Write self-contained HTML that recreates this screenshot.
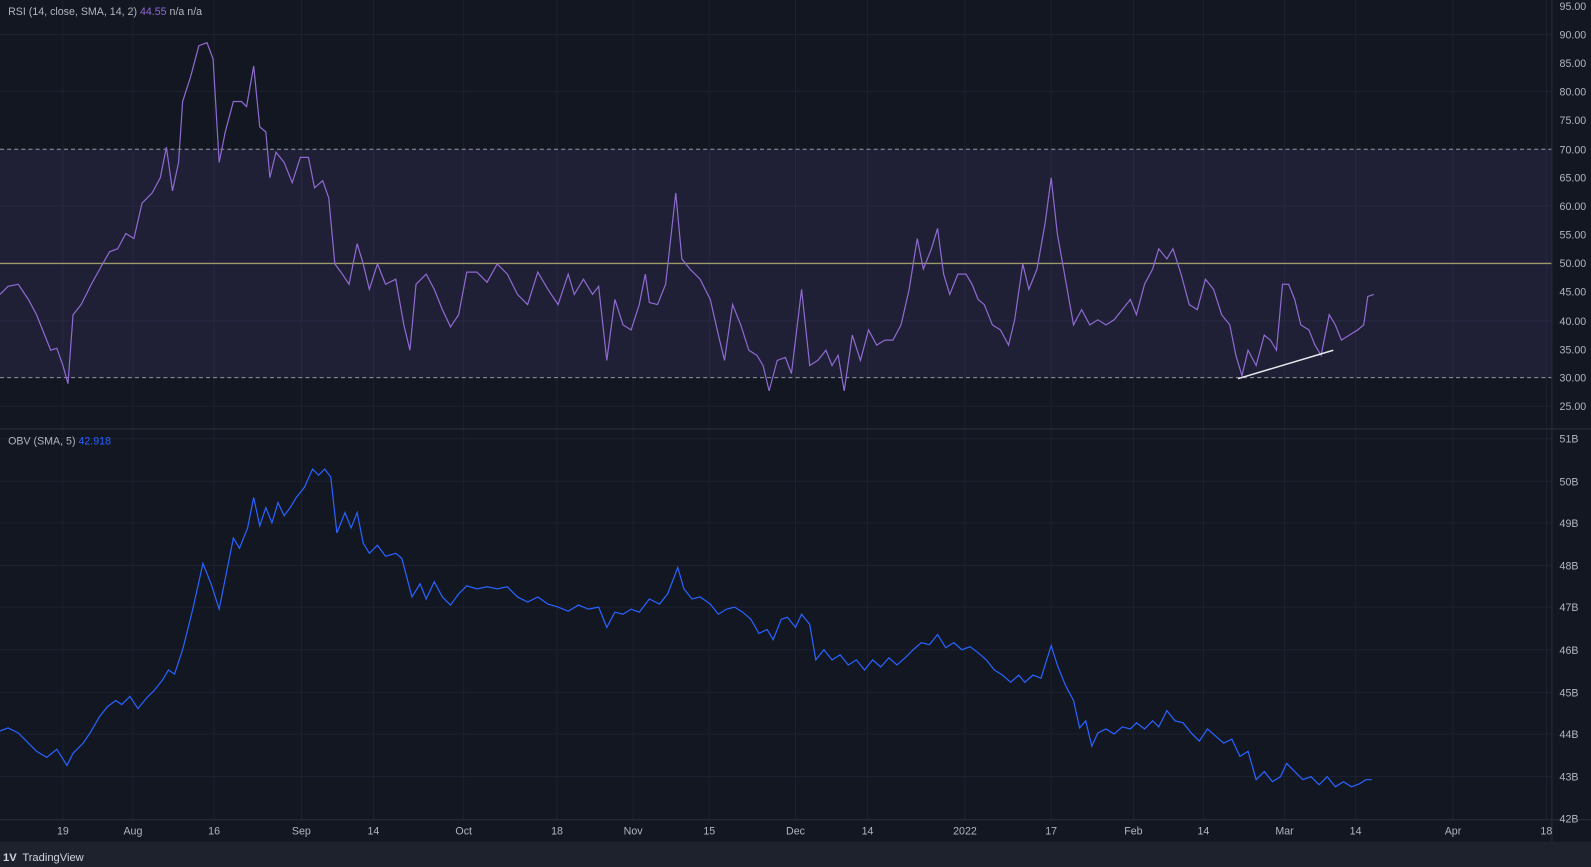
<!DOCTYPE html><html><head><meta charset="utf-8"><style>
html,body{margin:0;padding:0;background:#131722;width:1591px;height:867px;overflow:hidden;font-family:"Liberation Sans",sans-serif}
svg{position:absolute;left:0;top:0}
</style></head><body>
<svg width="1591" height="867" viewBox="0 0 1568 854" preserveAspectRatio="none" xmlns="http://www.w3.org/2000/svg" font-family="Liberation Sans, sans-serif">
<rect width="1568" height="854" fill="#131722"/>
<g stroke="#1d2130" stroke-width="1">
<line x1="62" y1="0" x2="62" y2="807"/><line x1="131" y1="0" x2="131" y2="807"/><line x1="211" y1="0" x2="211" y2="807"/><line x1="297" y1="0" x2="297" y2="807"/><line x1="368" y1="0" x2="368" y2="807"/><line x1="457" y1="0" x2="457" y2="807"/><line x1="549" y1="0" x2="549" y2="807"/><line x1="624" y1="0" x2="624" y2="807"/><line x1="699" y1="0" x2="699" y2="807"/><line x1="784" y1="0" x2="784" y2="807"/><line x1="855" y1="0" x2="855" y2="807"/><line x1="951" y1="0" x2="951" y2="807"/><line x1="1036" y1="0" x2="1036" y2="807"/><line x1="1117" y1="0" x2="1117" y2="807"/><line x1="1186" y1="0" x2="1186" y2="807"/><line x1="1266" y1="0" x2="1266" y2="807"/><line x1="1336" y1="0" x2="1336" y2="807"/><line x1="1432" y1="0" x2="1432" y2="807"/><line x1="1524" y1="0" x2="1524" y2="807"/>
<line x1="0" y1="34" x2="1529" y2="34"/><line x1="0" y1="90" x2="1529" y2="90"/><line x1="0" y1="203" x2="1529" y2="203"/><line x1="0" y1="316" x2="1529" y2="316"/><line x1="0" y1="400" x2="1529" y2="400"/>
<line x1="0" y1="432" x2="1529" y2="432"/><line x1="0" y1="474" x2="1529" y2="474"/><line x1="0" y1="515" x2="1529" y2="515"/><line x1="0" y1="557" x2="1529" y2="557"/><line x1="0" y1="598" x2="1529" y2="598"/><line x1="0" y1="640" x2="1529" y2="640"/><line x1="0" y1="682" x2="1529" y2="682"/><line x1="0" y1="723" x2="1529" y2="723"/><line x1="0" y1="765" x2="1529" y2="765"/>
</g>
<rect x="0" y="147" width="1529" height="225" fill="#7e57c2" fill-opacity="0.12"/>
<line x1="0" y1="147" x2="1529" y2="147" stroke="#9598a1" stroke-dasharray="4,3"/>
<line x1="0" y1="372" x2="1529" y2="372" stroke="#9598a1" stroke-dasharray="4,3"/>
<line x1="0" y1="259.5" x2="1529" y2="259.5" stroke="#9c9a6a" stroke-width="1.3"/>
<polyline fill="none" stroke="#8e6ad0" stroke-width="1.2" points="0,290 8,282 18,280 28,295 36,310 44,330 50,345 56,343 62,360 67,378 72,310 80,300 90,280 100,262 108,248 116,245 124,230 132,235 140,200 150,190 158,175 164,145 170,188 176,160 180,100 188,75 196,45 204,42 210,58 216,160 222,130 230,100 238,100 243,105 250,65 256,125 262,130 266,175 272,150 280,160 288,180 296,155 304,155 310,185 318,178 324,195 330,260 336,268 344,280 352,240 358,260 364,285 372,260 380,280 390,275 398,320 404,345 410,280 420,270 428,285 436,305 444,322 452,310 460,268 470,268 480,278 490,260 500,270 510,290 520,300 530,268 540,285 550,300 560,270 566,290 575,275 584,290 590,282 598,355 606,295 614,320 622,325 630,300 636,270 640,298 648,300 656,280 666,190 672,255 680,265 690,275 700,295 708,330 714,355 722,300 730,320 738,345 746,350 752,360 758,385 766,355 774,352 780,368 790,285 798,360 806,355 814,345 820,360 826,350 832,385 840,330 848,355 856,325 864,340 872,335 880,335 888,320 896,285 904,235 910,265 918,245 924,225 930,270 936,290 944,270 952,270 958,280 964,295 970,300 978,320 986,325 994,340 1000,315 1008,260 1014,285 1022,265 1030,220 1036,175 1042,230 1050,275 1058,320 1066,305 1074,320 1082,315 1090,320 1098,315 1106,305 1114,295 1120,310 1128,280 1136,265 1142,245 1150,255 1156,245 1164,270 1172,300 1180,305 1188,275 1196,285 1204,310 1212,320 1218,350 1224,370 1230,345 1238,360 1246,330 1252,335 1258,345 1264,280 1270,280 1276,295 1282,320 1290,325 1296,340 1302,350 1310,310 1316,320 1322,335 1330,330 1338,325 1344,320 1348,292 1354,290"/>
<line x1="1220" y1="373" x2="1314" y2="345" stroke="#e8e8ee" stroke-width="1.5"/>
<polyline fill="none" stroke="#2962ff" stroke-width="1.2" points="0,720 8,717 18,722 28,732 36,740 46,746 56,738 66,754 72,742 82,732 90,720 98,706 106,696 114,690 120,694 128,686 136,698 144,688 152,680 160,670 166,660 172,664 180,640 190,600 200,555 208,575 216,600 222,570 230,530 236,540 244,520 250,490 256,518 262,500 268,515 274,495 280,508 286,500 292,490 300,480 308,462 314,468 320,462 326,470 332,525 340,505 346,520 352,505 358,535 364,545 372,537 380,548 390,545 396,550 406,588 414,575 420,590 428,573 436,588 444,596 452,585 460,577 470,580 480,578 490,580 500,578 510,588 520,593 530,588 540,595 550,598 560,602 570,596 580,600 590,598 598,618 606,603 614,605 622,600 630,603 640,590 650,595 658,585 668,559 674,580 682,590 690,588 700,595 708,605 716,600 724,598 732,603 740,610 748,624 756,620 762,630 770,610 776,608 784,618 790,605 798,615 804,650 812,640 820,650 828,645 836,655 844,650 852,660 860,650 868,657 876,648 884,655 892,648 900,640 908,633 916,635 924,625 932,638 940,633 948,640 956,637 964,643 972,650 980,660 988,665 996,672 1004,665 1010,672 1018,665 1026,668 1030,655 1036,636 1042,655 1050,675 1058,690 1064,717 1070,710 1076,735 1082,722 1090,718 1098,723 1106,716 1114,718 1120,712 1128,718 1136,710 1142,716 1150,700 1158,710 1166,712 1174,722 1182,730 1190,718 1198,725 1206,732 1214,728 1222,745 1230,740 1238,768 1246,760 1254,770 1262,765 1268,752 1276,760 1284,768 1292,765 1300,773 1308,765 1316,775 1324,770 1332,775 1340,772 1346,768 1352,768"/>
<line x1="0" y1="422.5" x2="1568" y2="422.5" stroke="#2a2e39"/>
<line x1="1529.5" y1="0" x2="1529.5" y2="829" stroke="#2a2e39"/>
<line x1="0" y1="807.5" x2="1568" y2="807.5" stroke="#2a2e39"/>
<rect x="0" y="829" width="1568" height="25" fill="#1e222d"/>
<g fill="#b2b5be" font-size="10.5">
<text x="8" y="15">RSI (14, close, SMA, 14, 2)  <tspan fill="#8e6ad0">44.55</tspan>  n/a  n/a</text>
<text x="8" y="438">OBV (SMA, 5)  <tspan fill="#2962ff">42.918</tspan></text>
</g>
<g fill="#b2b5be" font-size="10.5">
<text x="1537" y="10">95.00</text><text x="1537" y="38">90.00</text><text x="1537" y="66">85.00</text><text x="1537" y="94">80.00</text><text x="1537" y="122">75.00</text><text x="1537" y="151">70.00</text><text x="1537" y="179">65.00</text><text x="1537" y="207">60.00</text><text x="1537" y="235">55.00</text><text x="1537" y="263">50.00</text><text x="1537" y="291">45.00</text><text x="1537" y="320">40.00</text><text x="1537" y="348">35.00</text><text x="1537" y="376">30.00</text><text x="1537" y="404">25.00</text>
<text x="1537" y="436">51B</text><text x="1537" y="478">50B</text><text x="1537" y="519">49B</text><text x="1537" y="561">48B</text><text x="1537" y="602">47B</text><text x="1537" y="644">46B</text><text x="1537" y="686">45B</text><text x="1537" y="727">44B</text><text x="1537" y="769">43B</text><text x="1537" y="810">42B</text>
</g>
<g fill="#b2b5be" font-size="10.5" text-anchor="middle">
<text x="62" y="822">19</text><text x="131" y="822">Aug</text><text x="211" y="822">16</text><text x="297" y="822">Sep</text><text x="368" y="822">14</text><text x="457" y="822">Oct</text><text x="549" y="822">18</text><text x="624" y="822">Nov</text><text x="699" y="822">15</text><text x="784" y="822">Dec</text><text x="855" y="822">14</text><text x="951" y="822">2022</text><text x="1036" y="822">17</text><text x="1117" y="822">Feb</text><text x="1186" y="822">14</text><text x="1266" y="822">Mar</text><text x="1336" y="822">14</text><text x="1432" y="822">Apr</text><text x="1524" y="822">18</text>
</g>
<text x="3" y="848" fill="#d1d4dc" font-size="11" font-weight="bold">1V</text>
<text x="22" y="848" fill="#d1d4dc" font-size="11">TradingView</text>
</svg>
</body></html>
